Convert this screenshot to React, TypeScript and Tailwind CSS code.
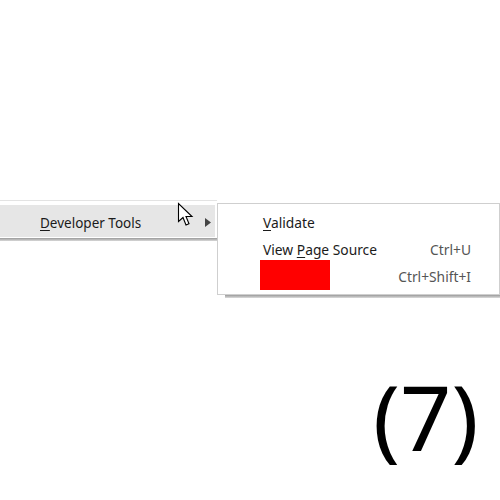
import React from "react";

export default function App() {
  const font = { fontFamily: '"Noto Sans", "Open Sans", sans-serif' };
  return (
    <div className="relative w-[500px] h-[500px] bg-white overflow-hidden" style={font}>
      {/* parent menu fragment */}
      <div className="absolute left-0 top-[200px] w-[217px] h-[38px] bg-white border-t border-[#e3e3e3]">
        <div className="mt-[4px] h-[32px] w-[215px] bg-[#e6e6e6] flex items-center">
          <span className="ml-[40px] mt-[5px] text-[13.5px] text-[#1b1b1b]">
            <span className="underline underline-offset-2">D</span>eveloper Tools
          </span>
          <svg className="ml-auto mr-[4px] mt-[2px]" width="6" height="9" viewBox="0 0 6 9">
            <path d="M0 0 L6 4.5 L0 9 Z" fill="#444" />
          </svg>
        </div>
      </div>
      <div className="absolute left-0 top-[238px] w-[217px] h-[3px] bg-gradient-to-b from-[#9a9a9a] to-[#d8d8d8]" />

      {/* cursor */}
      <svg className="absolute left-[177px] top-[202px]" width="17" height="26" viewBox="0 0 17 26">
        <path
          d="M1.5 1.5 L1.5 19.5 L6 15.5 L9 23 L12 21.8 L9 14.5 L15 14.5 Z"
          fill="white"
          stroke="black"
          strokeWidth="1.1"
          strokeLinejoin="miter"
        />
      </svg>

      {/* submenu */}
      <div className="absolute left-[217px] top-[203px] w-[283px] h-[92px] bg-white border border-[#cfcfcf] text-[13.8px] text-[#1b1b1b]">
        <div className="flex flex-col pt-[6px]">
          <div className="h-[27px] flex items-center pl-[45px] pr-[28px]">
            <span><span className="underline underline-offset-2">V</span>alidate</span>
          </div>
          <div className="h-[27px] flex items-center pl-[45px] pr-[28px]">
            <span>View <span className="underline underline-offset-2">P</span>age Source</span>
            <span className="ml-auto text-[#555]">Ctrl+U</span>
          </div>
          <div className="h-[27px] flex items-center pl-[42px] pr-[28px] relative">
            <div className="absolute left-[42px] top-[-4px] w-[70px] h-[30px] bg-[#ff0000]" />
            <span className="ml-auto text-[#555]">Ctrl+Shift+I</span>
          </div>
        </div>
      </div>
      <div className="absolute left-[225px] top-[295px] w-[275px] h-[3px] bg-gradient-to-b from-[#9a9a9a] to-[#dcdcdc]" />

      {/* label */}
      <div className="absolute left-[373px] top-[371px] text-[90px] leading-none text-black">(7)</div>
    </div>
  );
}
